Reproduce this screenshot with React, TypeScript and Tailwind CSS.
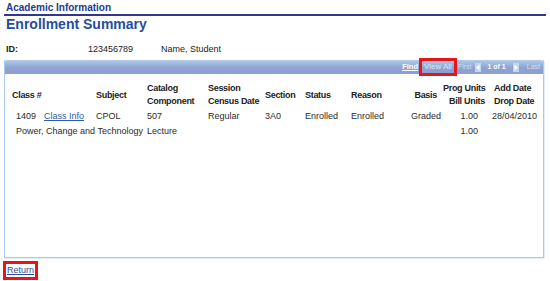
import React from "react";

const Arrow = ({ dir }: { dir: "left" | "right" }) => (
    <svg width="6" height="9" viewBox="0 0 6 9">
        <rect x="0" y="0" width="6" height="9" fill="#c3d6ef" />
        {dir === "left" ? (
            <polygon points="4.5,1.5 4.5,7.5 1.2,4.5" fill="#ffffff" />
        ) : (
            <polygon points="1.5,1.5 1.5,7.5 4.8,4.5" fill="#ffffff" />
        )}
    </svg>
);

const cols =
    "grid grid-cols-[84px_51px_61px_57px_40px_46px_52px_40px_43px_54px] pl-[7px] whitespace-nowrap";

export default function App() {
    return (
        <div className="w-[550px] h-[281px] bg-white overflow-hidden font-['Liberation_Sans',Arial,sans-serif]">
            <div className="pl-[6px] pt-[1px] text-[10px] leading-[13px] font-bold text-[#1c3b8d]">
                Academic Information
            </div>
            <div className="mx-[4px] h-[2px] bg-[#35358d]" />
            <div className="pl-[6px] text-[14px] leading-[16px] font-bold text-[#1e4f9e]">
                Enrollment Summary
            </div>

            {/* id row */}
            <div className="mt-[12px] flex pl-[6px] text-[9px] leading-[11px] text-[#222]">
                <span className="w-[82px] font-bold">ID:</span>
                <span className="w-[73px]">123456789</span>
                <span>Name, Student</span>
            </div>

            {/* grid box */}
            <div className="mt-[5px] mx-[4px] w-[540px] h-[198px] border border-t-0 border-[#a9c9ef] shadow-[1px_1px_0_#e3ecf7]">
                <div className="h-[14px] rounded-t-[2px] bg-[linear-gradient(#b4cae8,#8eaed8_45%,#9c9dd0_55%,#83a3d2)] flex items-center justify-end pr-[3px] leading-[12px] whitespace-nowrap">
                    <span className="text-[7.5px] font-bold text-white underline">Find</span>
                    <span className="ml-[4px] text-[8px] text-[#dde6f3] px-[2px] outline-[3px] outline-solid outline-[#e8141c]">
                        View All
                    </span>
                    <span className="ml-[4px] text-[7px] text-[#d3ddee]">First</span>
                    <span className="ml-[4px] flex">
                        <Arrow dir="left" />
                    </span>
                    <span className="ml-[6px] text-[7px] font-bold text-white">1 of 1</span>
                    <span className="ml-[7px] flex">
                        <Arrow dir="right" />
                    </span>
                    <span className="ml-[8px] text-[7px] text-[#d3ddee]">Last</span>
                </div>

                {/* headers */}
                <div className={`${cols} mt-[8px] text-[9px] leading-[13px] font-bold tracking-[-0.3px] text-[#222]`}>
                    <div className="self-center">Class #</div>
                    <div className="self-center">Subject</div>
                    <div>
                        Catalog
                        <br />
                        Component
                    </div>
                    <div>
                        Session
                        <br />
                        Census Date
                    </div>
                    <div className="self-center">Section</div>
                    <div className="self-center">Status</div>
                    <div className="self-center">Reason</div>
                    <div className="self-center text-right pr-[6px]">Basis</div>
                    <div className="text-right pr-[1px]">
                        Prog Units
                        <br />
                        Bill Units
                    </div>
                    <div className="pl-[8px]">
                        Add Date
                        <br />
                        Drop Date
                    </div>
                </div>

                {/* row 1 */}
                <div className={`${cols} mt-[1px] text-[9px] leading-[15px] text-[#2a2a2a]`}>
                    <div className="pl-[4px]">
                        1409
                        <span className="ml-[8px] text-[#2b5ca8] underline">Class Info</span>
                    </div>
                    <div>CPOL</div>
                    <div>507</div>
                    <div>Regular</div>
                    <div>3A0</div>
                    <div>Enrolled</div>
                    <div>Enrolled</div>
                    <div className="text-right pr-[2px]">Graded</div>
                    <div className="text-right pr-[8px]">1.00</div>
                    <div className="pl-[6px]">28/04/2010</div>
                </div>

                {/* row 2 */}
                <div className={`${cols} text-[9px] leading-[15px] text-[#2a2a2a]`}>
                    <div className="col-span-2 pl-[4px]">Power, Change and Technology</div>
                    <div>Lecture</div>
                    <div className="col-start-9 text-right pr-[8px]">1.00</div>
                </div>
            </div>

            <div className="mt-[6px] pl-[6px] text-[9px] leading-[13px]">
                <span className="inline-block px-[1px] text-[#2a4d9a] underline outline-[3px] outline-solid outline-[#e8141c]">
                    Return
                </span>
            </div>
        </div>
    );
}
